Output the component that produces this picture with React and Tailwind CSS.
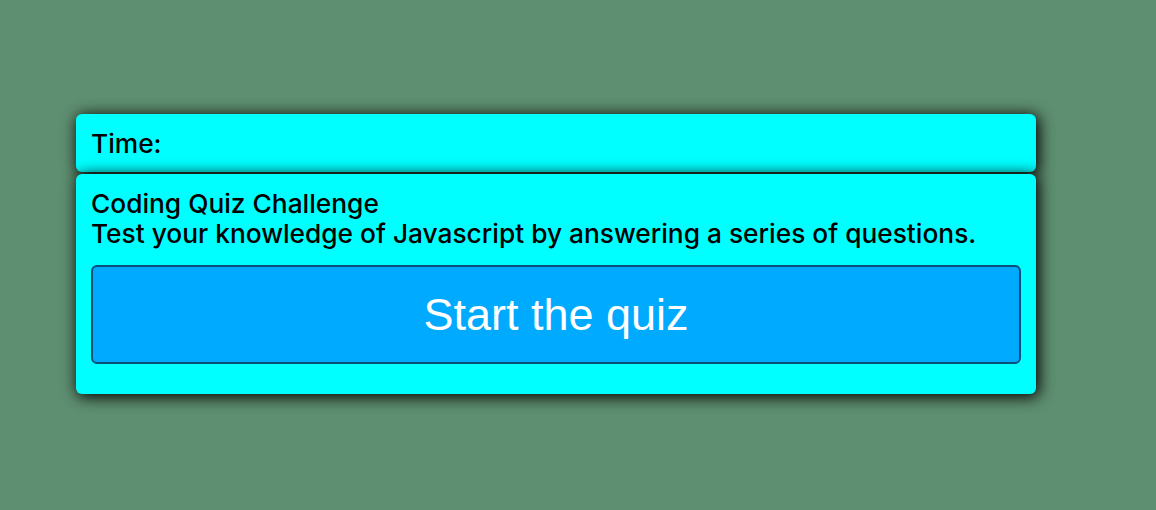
import React from 'react';

function App() {
  return (
    <div className="min-h-[510px] w-full bg-[#5e8f71] pt-[114px] pl-[76px]">
      <div className="w-[960px] font-['Inter',sans-serif] font-medium text-black">
        <div className="rounded-[6px] bg-[#00ffff] px-[15px] pt-[15px] pb-[13px] text-[26.3px] leading-[30px] shadow-[2px_2px_15px_1px_#000]">
          Time:
        </div>
        <div className="relative mt-[2px] rounded-[6px] bg-[#00ffff] px-[15px] pt-[15px] pb-[30px] text-[26.3px] leading-[30px] shadow-[2px_2px_15px_1px_#000]">
          <div>Coding Quiz Challenge</div>
          <div>Test your knowledge of Javascript by answering a series of questions.</div>
          <button className="mt-[16px] flex h-[99px] w-full items-center justify-center rounded-[6px] border-2 border-[#0b4f78] bg-[#00aaff] font-['Liberation_Sans',Arial,sans-serif] text-[45px] font-normal text-white">
            Start the quiz
          </button>
        </div>
      </div>
    </div>
  );
}

export default App;
